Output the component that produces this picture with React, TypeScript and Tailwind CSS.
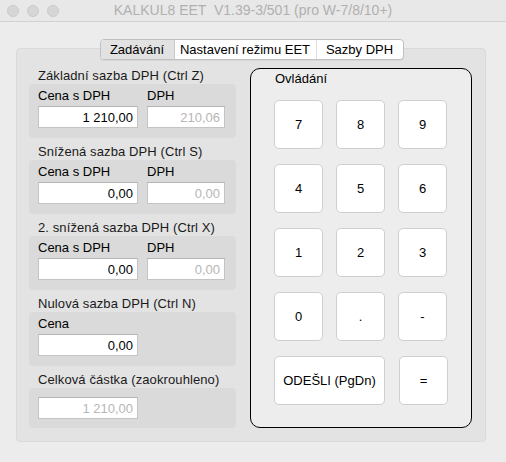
import React from "react";

const font = { fontFamily: '"Liberation Sans", Arial, sans-serif' };

function Field({ value, disabled, w }: { value: string; disabled?: boolean; w: string }) {
  return (
    <div
      className={`${w} h-[22px] bg-white border border-[#c4c4c4] border-t-[#b4b4b4] flex items-center justify-end pr-[4px] text-[13px] leading-none ${
        disabled ? "text-[#b6b6b6]" : "text-black"
      }`}
    >
      {value}
    </div>
  );
}

function Section({
  title,
  children,
  short,
}: {
  title: string;
  children: React.ReactNode;
  short?: boolean;
}) {
  return (
    <div className="flex flex-col">
      <div className="h-[22px] pt-[6px] pl-[9px] text-[13px] leading-[16px] text-[#1a1a1a] tracking-[0.1px]">{title}</div>
      <div
        className={`bg-[#dadada] rounded-[4px] pl-[9px] ${short ? "h-[40px] pt-[9px]" : "h-[54px] pt-[4px]"}`}
      >
        {children}
      </div>
    </div>
  );
}

function TwoFields({ a, b }: { a: string; b: string }) {
  return (
    <div className="flex gap-[9px]">
      <div className="flex flex-col">
        <div className="h-[18px] text-[13px] leading-[16px] text-black">Cena s DPH</div>
        <Field value={a} w="w-[100px]" />
      </div>
      <div className="flex flex-col">
        <div className="h-[18px] text-[13px] leading-[16px] text-black">DPH</div>
        <Field value={b} w="w-[78px]" disabled />
      </div>
    </div>
  );
}

function Key({ label, w = "w-[49px]", cls = "" }: { label: string; w?: string; cls?: string }) {
  return (
    <div
      className={`${w} h-[49px] bg-white border border-[#cfcfcf] rounded-[5px] flex items-center justify-center text-[13px] text-black ${cls}`}
    >
      {label}
    </div>
  );
}

export default function App() {
  return (
    <div className="w-[506px] h-[462px] bg-[#ececec] overflow-hidden flex flex-col" style={font}>
      {/* Title bar */}
      <div className="h-[22px] bg-[#e8e8e8] border-b border-[#d2d2d2] flex items-center relative">
        <div className="flex gap-[8px] pl-[7px]">
          <div className="w-[12px] h-[12px] rounded-full bg-[#d6d6d6] border border-[#cacaca]" />
          <div className="w-[12px] h-[12px] rounded-full bg-[#d6d6d6] border border-[#cacaca]" />
          <div className="w-[12px] h-[12px] rounded-full bg-[#d6d6d6] border border-[#cacaca]" />
        </div>
        <div className="absolute inset-0 flex items-center justify-center text-[14px] text-[#b0b0b0] whitespace-pre">
          {"KALKUL8 EET  V1.39-3/501 (pro W-7/8/10+)"}
        </div>
      </div>

      {/* Body */}
      <div className="px-[16px] pt-[17px] flex flex-col">
        <div className="relative z-10 flex justify-center pr-[3px]">
          <div className="flex h-[21px] border border-[#c0c0c0] rounded-[4px] bg-white text-[13px] overflow-hidden shadow-[0_1px_0_rgba(0,0,0,0.05)]">
            <div className="w-[74px] flex items-center justify-center bg-[#e2e2e2] border-r border-[#c8c8c8] text-black">
              Zadávání
            </div>
            <div className="w-[142px] flex items-center justify-center border-r border-[#e0e0e0] text-black">
              Nastavení režimu EET
            </div>
            <div className="w-[86px] flex items-center justify-center text-black">Sazby DPH</div>
          </div>
        </div>

        <div className="-mt-[12px] w-[470px] h-[394px] bg-[#e3e3e3] border border-[#dadada] rounded-[4px] flex items-start pl-[12px] pt-[13px] gap-[14px]">
          {/* left column */}
          <div className="w-[207px] flex flex-col">
            <Section title="Základní sazba DPH (Ctrl Z)">
              <TwoFields a="1 210,00" b="210,06" />
            </Section>
            <Section title="Snížená sazba DPH (Ctrl S)">
              <TwoFields a="0,00" b="0,00" />
            </Section>
            <Section title="2. snížená sazba DPH (Ctrl X)">
              <TwoFields a="0,00" b="0,00" />
            </Section>
            <Section title="Nulová sazba DPH (Ctrl N)">
              <div className="flex flex-col">
                <div className="h-[18px] text-[13px] leading-[16px] text-black">Cena</div>
                <Field value="0,00" w="w-[100px]" />
              </div>
            </Section>
            <Section title="Celková částka (zaokrouhleno)" short>
              <Field value="1 210,00" w="w-[100px]" disabled />
            </Section>
          </div>

          {/* right panel */}
          <div className="mt-[6px] w-[222px] h-[360px] bg-[#ededed] border border-black rounded-[10px] pl-[23px] pt-[2px] flex flex-col">
            <div className="h-[16px] leading-[16px] text-[13px] text-black pl-[1px]">Ovládání</div>
            <div className="mt-[13px] grid grid-cols-[49px_49px_49px] gap-x-[13px] gap-y-[15px]">
              {["7", "8", "9", "4", "5", "6", "1", "2", "3", "0", ".", "-"].map((k) => (
                <Key key={k} label={k} />
              ))}
            </div>
            <div className="mt-[15px] flex">
              <Key label="ODEŠLI (PgDn)" w="w-[111px]" />
              <Key label="=" cls="ml-[14px]" />
            </div>
          </div>
        </div>
      </div>
    </div>
  );
}
